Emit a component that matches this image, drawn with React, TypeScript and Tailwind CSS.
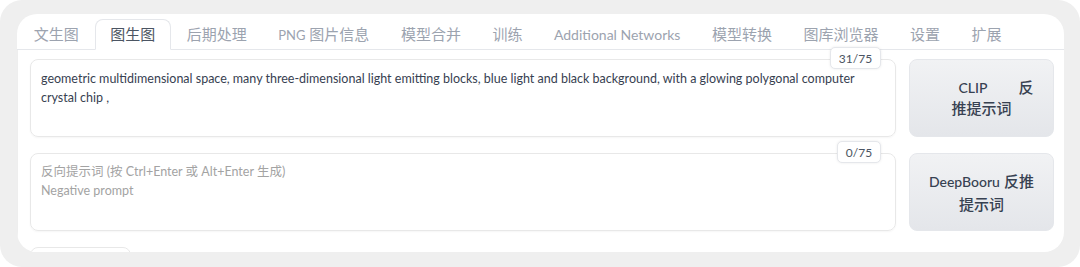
import React from "react";

const tabs: React.ReactNode[] = [
  "文生图",
  "图生图",
  "后期处理",
  <>
    <span className="text-[13px]">PNG</span> 图片信息
  </>,
  "模型合并",
  "训练",
  <span className="text-[14px]">Additional Networks</span>,
  "模型转换",
  "图库浏览器",
  "设置",
  "扩展",
];

const font = {
  fontFamily: '"Lato", "Noto Sans CJK SC", sans-serif',
};

export default function App() {
  return (
    <div className="w-[1080px] h-[267px] bg-white" style={font}>
      <div className="w-full h-full bg-[#efefef] rounded-[22px] pt-[14px] pl-[17px] pr-[16px] pb-[15px]">
        <div className="w-full h-full bg-white rounded-[20px] overflow-hidden flex flex-col">
          {/* tabs */}
          <div className="flex items-end pl-[1px] border-b border-[#e5e7eb] h-[36px] shrink-0">
            {tabs.map((t, i) => (
              <div
                key={i}
                className={
                  i === 1
                    ? "h-[31px] px-[14.75px] flex items-center border border-[#e5e7eb] border-b-white rounded-t-[8px] bg-white text-[15px] text-[#4b5563] -mb-px"
                    : "h-[31px] px-[14.75px] flex items-center border border-transparent text-[15px] text-[#9ca3af] -mb-px"
                }
              >
                <span className="whitespace-pre">{t}</span>
              </div>
            ))}
          </div>
          {/* panel */}
          <div className="flex-1 border-l border-[#eeeeee] pl-[12px] pr-[10px] pt-[9px] flex flex-col gap-[16px]">
            <div className="flex gap-[13px]">
              <div className="relative w-[866px] h-[78px] border border-[#e8e8e8] rounded-[8px] shadow-[0_1px_2px_rgba(0,0,0,0.04)] px-[10px] pt-[9px] text-[12.5px] leading-[19px] text-[#374151]">
                geometric multidimensional space, many three-dimensional light emitting blocks, blue light and black background, with a glowing polygonal computer crystal chip ,
                <div className="absolute right-[14px] -top-[13px] h-[22px] w-[51px] flex items-center justify-center bg-white border border-[#e5e7eb] rounded-[5px] shadow-[0_0_3px_rgba(0,0,0,0.08)] text-[12px] text-[#4b5563]">
                  31/75
                </div>
              </div>
              <div className="w-[145px] h-[78px] rounded-[8px] bg-gradient-to-b from-[#f1f2f4] to-[#e4e6ea] border border-[#e5e7eb] flex flex-col items-center justify-center font-medium text-[#374151] leading-[21px]">
                <div className="flex gap-[31px] pl-[29px]">
                  <span className="text-[14px]">CLIP</span>
                  <span className="text-[15px]">反</span>
                </div>
                <div className="text-[15px]">推提示词</div>
              </div>
            </div>
            <div className="flex gap-[13px]">
              <div className="relative w-[866px] h-[78px] border border-[#e8e8e8] rounded-[8px] shadow-[0_1px_2px_rgba(0,0,0,0.04)] px-[10px] pt-[8px] text-[12.5px] leading-[19px] text-[#a3a3a3]">
                <div>反向提示词 (按 Ctrl+Enter 或 Alt+Enter 生成)</div>
                <div>Negative prompt</div>
                <div className="absolute right-[14px] -top-[13px] h-[22px] w-[44px] flex items-center justify-center bg-white border border-[#e5e7eb] rounded-[5px] shadow-[0_0_3px_rgba(0,0,0,0.08)] text-[12px] text-[#4b5563]">
                  0/75
                </div>
              </div>
              <div className="w-[145px] h-[78px] rounded-[8px] bg-gradient-to-b from-[#f1f2f4] to-[#e4e6ea] border border-[#e5e7eb] flex flex-col items-center justify-center font-medium text-[#374151] leading-[22px]">
                <div>
                  <span className="text-[14px]">DeepBooru</span> <span className="text-[15px]">反推</span>
                </div>
                <div className="text-[15px]">提示词</div>
              </div>
            </div>
            <div className="w-[101px] h-[20px] shrink-0 border border-[#e8e8e8] rounded-[8px] bg-white"></div>
          </div>
        </div>
      </div>
    </div>
  );
}
